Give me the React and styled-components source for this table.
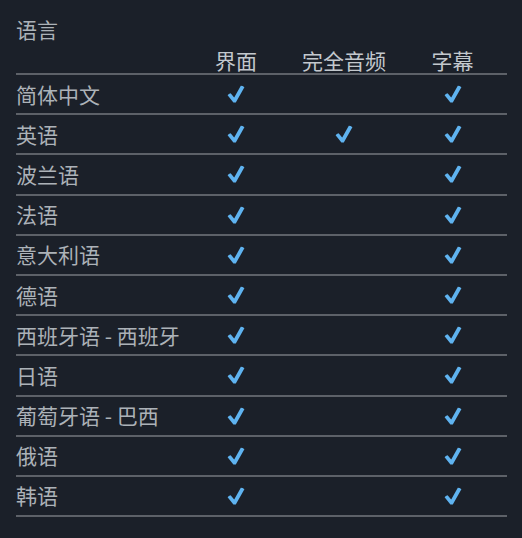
import React from "react";
import styled, { createGlobalStyle } from "styled-components";

const GlobalStyle = createGlobalStyle`
  html, body {
    margin: 0;
    padding: 0;
    background: #1b2029;
  }
  body {
    font-family: "Noto Sans CJK SC", "Noto Sans", sans-serif;
  }
`;

const languages = [
  { name: "简体中文", ui: true, audio: false, subs: true },
  { name: "英语", ui: true, audio: true, subs: true },
  { name: "波兰语", ui: true, audio: false, subs: true },
  { name: "法语", ui: true, audio: false, subs: true },
  { name: "意大利语", ui: true, audio: false, subs: true },
  { name: "德语", ui: true, audio: false, subs: true },
  { name: "西班牙语 - 西班牙", ui: true, audio: false, subs: true },
  { name: "日语", ui: true, audio: false, subs: true },
  { name: "葡萄牙语 - 巴西", ui: true, audio: false, subs: true },
  { name: "俄语", ui: true, audio: false, subs: true },
  { name: "韩语", ui: true, audio: false, subs: true },
];

function Check() {
  return (
    <CheckIcon viewBox="0 0 20 20">
      <path d="M1.6 11.2 Q2.6 9.8 4.6 9.2 L8.2 13.6 L14.8 1.8 Q16.8 1.8 18.4 3.2 L9.8 18.6 L7.4 18.6 Z" />
    </CheckIcon>
  );
}

export default function App() {
  return (
    <>
      <GlobalStyle />
      <Panel>
        <Title>语言</Title>
        <Table>
          <HeadRow>
            <span></span>
            <HeadCell>界面</HeadCell>
            <HeadCell>完全音频</HeadCell>
            <HeadCell>字幕</HeadCell>
          </HeadRow>
          {languages.map((l) => (
            <Row key={l.name}>
              <Name>{l.name}</Name>
              <Cell>{l.ui && <Check />}</Cell>
              <Cell>{l.audio && <Check />}</Cell>
              <Cell>{l.subs && <Check />}</Cell>
            </Row>
          ))}
        </Table>
      </Panel>
    </>
  );
}

const Panel = styled.div`
  width: 522px;
  height: 538px;
  box-sizing: border-box;
  padding: 15px 15px 0 16px;
  background: #1b2029;
  color: #acb2b8;
`;

const Title = styled.div`
  font-size: 21px;
  line-height: 28px;
  color: #acb2b8;
`;

const Table = styled.div`
  width: 491px;
  display: flex;
  flex-direction: column;
`;

const HeadRow = styled.div`
  display: grid;
  grid-template-columns: 166px 108px 108px 109px;
  height: 30px;
  align-items: end;
  border-bottom: 2px solid #5d6168;
`;

const HeadCell = styled.div`
  font-size: 21px;
  line-height: 26px;
  text-align: center;
  color: #c3c8cd;
`;

const Row = styled.div`
  display: grid;
  grid-template-columns: 166px 108px 108px 109px;
  height: 38.2px;
  align-items: center;
  border-bottom: 2px solid #5d6168;
`;

const Name = styled.div`
  font-size: 21px;
  line-height: 26px;
  margin-top: -1px;
  white-space: nowrap;
  color: #acb2b8;
`;

const Cell = styled.div`
  display: flex;
  justify-content: center;
  align-items: center;
`;

const CheckIcon = styled.svg`
  width: 20px;
  height: 20px;
  fill: #5fb3f0;
`;
